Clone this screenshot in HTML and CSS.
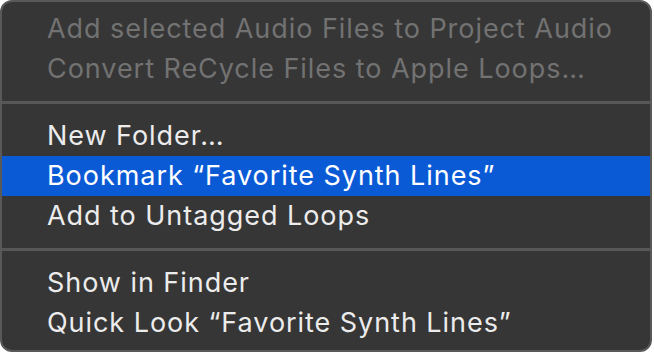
FILE: index.html
```html
<!DOCTYPE html>
<html lang="en">
<head>
  <meta charset="UTF-8">
  <meta name="viewport" content="width=device-width, initial-scale=1.0">
  <title>Loop Browser Menu</title>
  <link rel="stylesheet" href="styles.css">
</head>
<body>
  <div class="menu">
    <div class="item disabled">Add selected Audio Files to Project Audio</div>
    <div class="item disabled">Convert ReCycle Files to Apple Loops…</div>
    <div class="separator"></div>
    <div class="item">New Folder…</div>
    <div class="item selected">Bookmark “Favorite Synth Lines”</div>
    <div class="item">Add to Untagged Loops</div>
    <div class="separator"></div>
    <div class="item">Show in Finder</div>
    <div class="item">Quick Look “Favorite Synth Lines”</div>
  </div>
</body>
</html>
```

FILE: styles.css
```css
body {
  margin: 0;
  background-color: #ffffff;
  font-family: Inter, "Open Sans", sans-serif;
}
.menu {
  width: 652px;
  box-sizing: border-box;
  background-color: #363636;
  border: 2px solid #595959;
  border-radius: 12px;
  padding: 7px 0;
}
.item {
  height: 40px;
  line-height: 39px;
  padding-left: 45px;
  font-size: 27px;
  letter-spacing: 0.95px;
  color: #ececec;
  white-space: nowrap;
}
.disabled {
  color: #727272;
}
.selected {
  background-color: #0a5ad6;
  color: #ffffff;
}
.separator {
  height: 3px;
  margin: 12px 0;
  background-color: #575757;
}
```
